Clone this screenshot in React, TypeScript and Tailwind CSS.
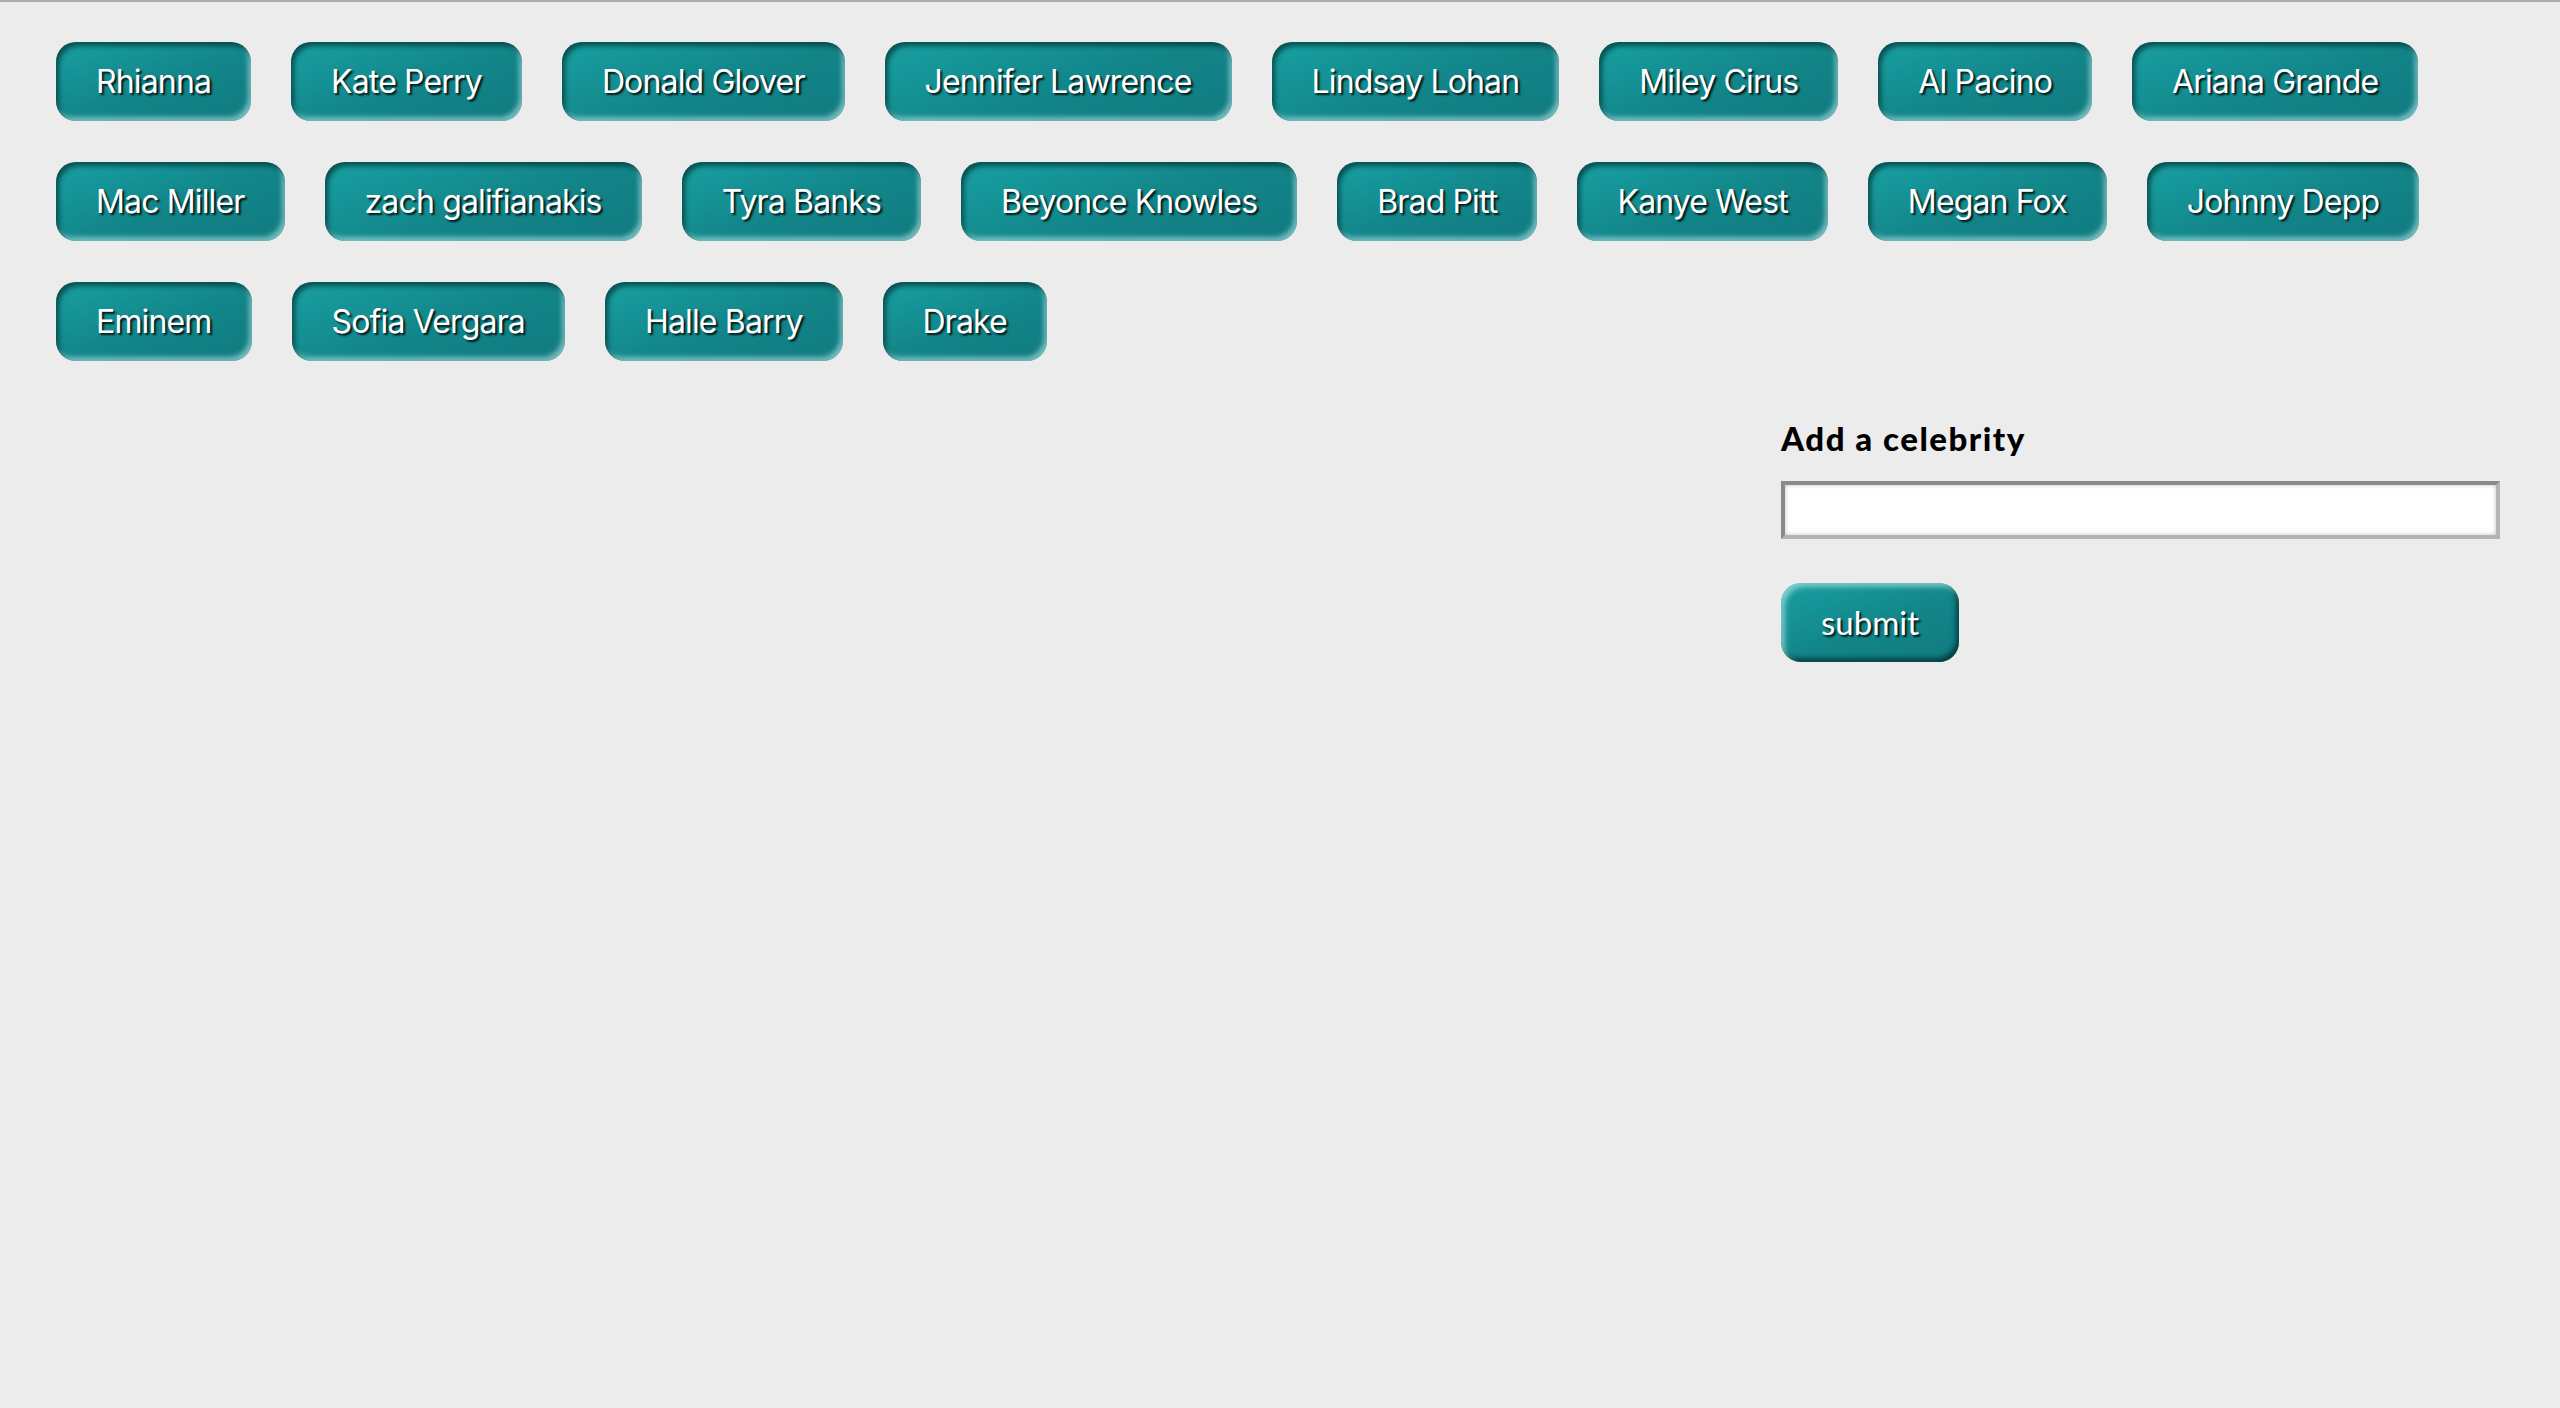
import React from 'react';

const celebs = [
  'Rhianna', 'Kate Perry', 'Donald Glover', 'Jennifer Lawrence', 'Lindsay Lohan', 'Miley Cirus', 'Al Pacino', 'Ariana Grande',
  'Mac Miller', 'zach galifianakis', 'Tyra Banks', 'Beyonce Knowles', 'Brad Pitt', 'Kanye West', 'Megan Fox', 'Johnny Depp',
  'Eminem', 'Sofia Vergara', 'Halle Barry', 'Drake',
];

const CelebApp: React.FC = () => {
  return (
    <div className="min-h-screen bg-[#ececec] border-t-2 border-[#acacac]">
      <div className="flex flex-wrap gap-x-[40px] gap-y-[41px] pl-[56px] pr-[100px] pt-[40px]">
        {celebs.map((name) => (
          <button
            key={name}
            className="h-[79px] px-[40px] rounded-[20px] text-white text-[32px] tracking-[-0.85px] font-['Inter',sans-serif] [text-shadow:2px_2px_2px_rgba(0,0,0,0.85)] bg-[linear-gradient(160deg,#18a0a2_0%,#128589_55%,#117b80_100%)] shadow-[inset_3px_4px_5px_rgba(0,40,40,0.65),inset_-3px_-4px_5px_rgba(200,240,240,0.55)]"
          >
            {name}
          </button>
        ))}
      </div>

      <div className="flex justify-end pr-[60px] pt-[57px]">
        <form className="w-[719px] flex flex-col items-start" onSubmit={(e) => e.preventDefault()}>
          <label htmlFor="celeb" className="text-[33px] font-black tracking-[1.5px] text-black font-['Lato',sans-serif] leading-[40px]">
            Add a celebrity
          </label>
          <input
            id="celeb"
            type="text"
            className="mt-[23px] w-full h-[58px] bg-white border-4 border-t-[#8a8a8a] border-l-[#8a8a8a] border-b-[#b4b4b4] border-r-[#b4b4b4] shadow-[inset_0_0_4px_rgba(0,0,0,0.25)] outline-none"
          />
          <button
            type="submit"
            className="mt-[44px] w-[178px] h-[79px] rounded-[20px] text-white text-[33px] font-['Lato',sans-serif] [text-shadow:2px_2px_2px_rgba(0,0,0,0.85)] bg-[linear-gradient(160deg,#18a0a2_0%,#128589_55%,#117b80_100%)] shadow-[inset_4px_4px_5px_rgba(200,240,240,0.55),inset_-3px_-4px_5px_rgba(0,40,40,0.7)]"
          >
            submit
          </button>
        </form>
      </div>
    </div>
  );
};

export default function App() {
  return <CelebApp />;
}
